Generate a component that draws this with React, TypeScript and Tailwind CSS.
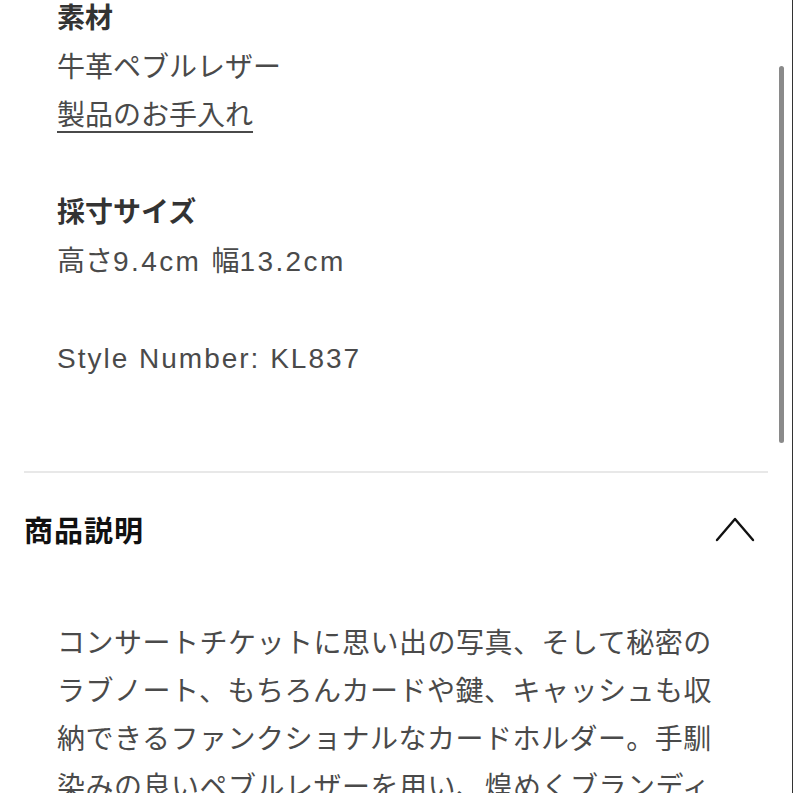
const font = { fontFamily: '"Liberation Sans", "Noto Sans CJK JP", sans-serif' };

export default function App() {
  return (
    <div
      className="relative h-[793px] w-[793px] overflow-hidden bg-white border-r border-[#333]"
      style={font}
    >
      {/* details */}
      <div className="pl-[57px] -mt-[5px] text-[28px] leading-[48.5px] text-[#4a4a4a]">
        <p className="font-bold text-[#333]">素材</p>
        <p>牛革ペブルレザー</p>
        <p>
          <a className="underline underline-offset-[6px] decoration-[2px]">製品のお手入れ</a>
        </p>
        <p className="h-[48.5px]" />
        <p className="font-bold text-[#333]">採寸サイズ</p>
        <p>
          高さ<span className="tracking-[2.4px]">9.4cm </span>幅<span className="tracking-[2.4px]">13.2cm</span>
        </p>
        <p className="h-[48.5px]" />
        <p className="tracking-[2px]">Style Number: KL837</p>
      </div>

      <div className="mx-[24px] mt-[88px] border-t-2 border-[#e8e8e8]" />

      <div className="flex items-center justify-between pl-[24px] pr-[37px] pt-[36px]">
        <h2 className="text-[29px] leading-[46px] font-bold text-[#111] tracking-[1px]">商品説明</h2>
        <svg width="40" height="26" viewBox="0 0 40 26" fill="none" className="mb-[6px] text-[#111]">
          <polyline points="2,24 20,3 38,24" stroke="currentColor" strokeWidth="2.4" strokeLinecap="round" strokeLinejoin="round" />
        </svg>
      </div>

      <p className="mt-[65px] ml-[57px] w-[680px] text-[28px] leading-[48px] tracking-[0.5px] text-[#4a4a4a]">
        コンサートチケットに思い出の写真、そして秘密のラブノート、もちろんカードや鍵、キャッシュも収納できるファンクショナルなカードホルダー。手馴染みの良いペブルレザーを用い、煌めくブランディングをあしらいました。
      </p>

      {/* overlay scrollbar */}
      <div className="absolute right-[8px] top-[66px] h-[377px] w-[5px] rounded-full bg-[#8a8a8a]" />
    </div>
  );
}
